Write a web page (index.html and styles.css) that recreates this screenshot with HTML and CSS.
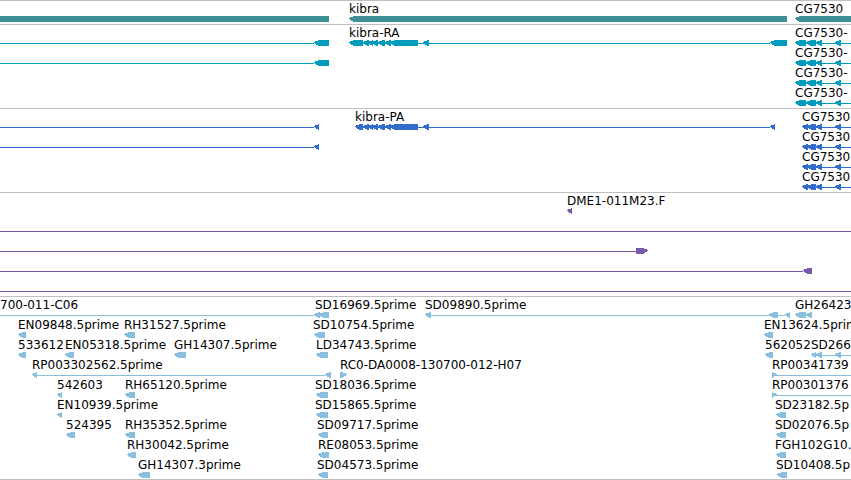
FILE: index.html
```html
<!DOCTYPE html>
<html lang="en">
<head>
    <meta charset="UTF-8">
    <meta name="viewport" content="width=device-width, initial-scale=1.0">
    <title>Genome browser</title>
    <link rel="stylesheet" href="styles.css">
</head>
<body>
    <main id="browser"></main>
    <script src="tracks.js"></script>
</body>
</html>
```
FILE: styles.css
```css
body {
    margin: 0;
    background-color: #fff;
    color: #000;
    font-family: "DejaVu Sans", sans-serif;
    font-size: 12px;
    line-height: 17px;
}
#browser {
    overflow: hidden;
    border-bottom: 1px solid #bfbfbf;
}
.track {
    border-top: 1px solid #bfbfbf;
    padding-bottom: 3px;
}
.track:last-child {
    padding-bottom: 2px;
}
.row {
    position: relative;
    height: 20px;
}
.label {
    position: absolute;
    top: 0;
    white-space: nowrap;
}
.glyphs {
    position: absolute;
    top: 15px;
    left: 0;
    width: 100%;
    height: 6px;
    fill: currentColor;
    shape-rendering: crispEdges;
}
.gene .glyphs {
    color: #3f8f96;
}
.transcript .glyphs {
    color: #009cbe;
}
.protein .glyphs {
    color: #336dcc;
}
.clone .glyphs {
    color: #785aa8;
}
.est .glyphs {
    color: #8abede;
}
```
FILE: tracks.js
```js
// left: boxes pointing left, right: boxes pointing right, lines: introns
// all positions are along the sequence, END runs past the visible part
var END = 4000;

var raExons = [[363, 369], [368, 373], [372, 378], [378, 385], [385, 391], [390, 418], [423, 429]];
var cgExons = [[795, 806], [806, 816], [816, 822], [835, 841]];
var cgCoding = [[802, 808], [807, 816], [816, 822], [835, 841]];

var tracks = [
    {
        type: 'gene',
        rows: [
            {
                labels: [[349, 'kibra'], [795, 'CG7530']],
                left: [[-20, 329], [349, 787], [795, END]]
            }
        ]
    },
    {
        type: 'transcript',
        rows: [
            {
                labels: [[349, 'kibra-RA'], [795, 'CG7530-']],
                lines: [[0, 314], [363, 770], [806, END]],
                left: [[314, 329], [349, 363], [770, 787]].concat(raExons, cgExons)
            },
            {
                labels: [[795, 'CG7530-']],
                lines: [[0, 314], [806, END]],
                left: [[314, 329]].concat(cgExons)
            },
            { labels: [[795, 'CG7530-']], lines: [[806, END]], left: cgExons },
            { labels: [[795, 'CG7530-']], lines: [[806, END]], left: cgExons }
        ]
    },
    {
        type: 'protein',
        rows: [
            {
                labels: [[355, 'kibra-PA'], [802, 'CG7530']],
                lines: [[0, 314], [363, 770], [807, END]],
                left: [[314, 319], [355, 363], [770, 775]].concat(raExons, cgCoding)
            },
            {
                labels: [[802, 'CG7530']],
                lines: [[0, 314], [807, END]],
                left: [[314, 319]].concat(cgCoding)
            },
            { labels: [[802, 'CG7530']], lines: [[807, END]], left: cgCoding },
            { labels: [[802, 'CG7530']], lines: [[807, END]], left: cgCoding }
        ]
    },
    {
        type: 'clone',
        rows: [
            { labels: [[567, 'DME1-011M23.F']], left: [[567, 572]] },
            { lines: [[0, END]] },
            { lines: [[0, 636]], right: [[636, 648]] },
            { lines: [[0, 803]], left: [[803, 812]] },
            { lines: [[0, END]] }
        ]
    },
    {
        type: 'est',
        rows: [
            {
                labels: [[0, '700-011-C06'], [315, 'SD16969.5prime'], [425, 'SD09890.5prime'], [795, 'GH26423']],
                lines: [[0, 314], [431, 785], [806, 812]],
                left: [[314, 320], [319, 329], [425, 431], [769, 778], [785, 790], [795, 806], [806, 812]]
            },
            {
                labels: [[18, 'EN09848.5prime'], [124, 'RH31527.5prime'], [313, 'SD10754.5prime'], [764, 'EN13624.5prime']],
                left: [[18, 26], [124, 135], [314, 325], [764, 773]]
            },
            {
                labels: [[18, '533612'], [65, 'EN05318.5prime'], [174, 'GH14307.5prime'], [316, 'LD34743.5prime'], [765, '562052'], [811, 'SD266']],
                lines: [[816, END]],
                left: [[18, 26], [65, 74], [174, 186], [316, 328], [765, 773], [811, 816], [816, 822], [835, 841]]
            },
            {
                labels: [[32, 'RP003302562.5prime'], [340, 'RC0-DA0008-130700-012-H07'], [772, 'RP00341739']],
                lines: [[37, 325], [772, END]],
                left: [[32, 37], [325, 331]],
                right: [[340, 347], [772, 777]]
            },
            {
                labels: [[57, '542603'], [125, 'RH65120.5prime'], [315, 'SD18036.5prime'], [772, 'RP00301376']],
                lines: [[772, END]],
                left: [[57, 62], [125, 135], [316, 328]],
                right: [[772, 777]]
            },
            {
                labels: [[57, 'EN10939.5prime'], [315, 'SD15865.5prime'], [775, 'SD23182.5p']],
                left: [[57, 62], [316, 328], [776, 786]]
            },
            {
                labels: [[66, '524395'], [125, 'RH35352.5prime'], [317, 'SD09717.5prime'], [775, 'SD02076.5p']],
                left: [[66, 75], [125, 135], [318, 328], [776, 786]]
            },
            {
                labels: [[127, 'RH30042.5prime'], [318, 'RE08053.5prime'], [775, 'FGH102G10.']],
                left: [[127, 136], [318, 329], [776, 786]]
            },
            {
                labels: [[138, 'GH14307.3prime'], [317, 'SD04573.5prime'], [776, 'SD10408.5p']],
                left: [[138, 150], [318, 328], [777, 787]]
            }
        ]
    }
];

var SVG = 'http://www.w3.org/2000/svg';

function addPath(svg, d) {
    var path = document.createElementNS(SVG, 'path');
    path.setAttribute('d', d);
    svg.appendChild(path);
}

function drawRow(data) {
    var row = document.createElement('div');
    row.className = 'row';

    var svg = document.createElementNS(SVG, 'svg');
    svg.setAttribute('class', 'glyphs');
    svg.setAttribute('aria-hidden', 'true');
    (data.lines || []).forEach(function (s) {
        addPath(svg, 'M' + s[0] + ' 3H' + s[1] + 'V4H' + s[0] + 'Z');
    });
    // the tip is one pixel high
    (data.left || []).forEach(function (s) {
        addPath(svg, 'M' + s[0] + ' 2L' + (s[0] + 5) + ' 0H' + s[1] + 'V6H' + (s[0] + 5) + 'L' + s[0] + ' 3Z');
    });
    (data.right || []).forEach(function (s) {
        addPath(svg, 'M' + s[1] + ' 2L' + (s[1] - 5) + ' 0H' + s[0] + 'V6H' + (s[1] - 5) + 'L' + s[1] + ' 3Z');
    });
    row.appendChild(svg);

    (data.labels || []).forEach(function (l) {
        var label = document.createElement('span');
        label.className = 'label';
        label.style.left = l[0] + 'px';
        label.textContent = l[1];
        row.appendChild(label);
    });
    return row;
}

tracks.forEach(function (track) {
    var section = document.createElement('section');
    section.className = 'track ' + track.type;
    track.rows.forEach(function (data) {
        section.appendChild(drawRow(data));
    });
    document.getElementById('browser').appendChild(section);
});
```
